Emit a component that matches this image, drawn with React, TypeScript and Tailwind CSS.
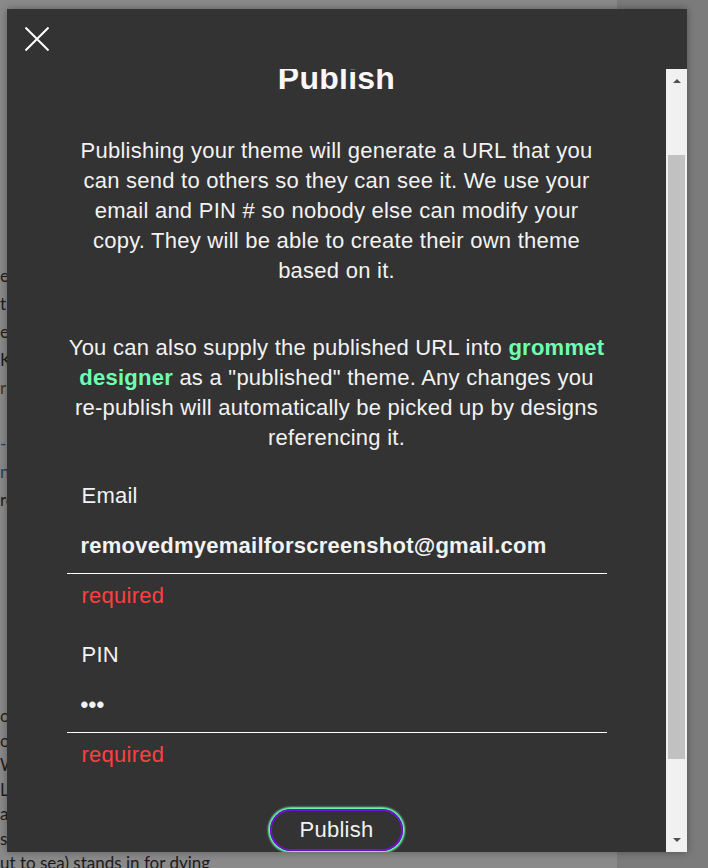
import { Fragment } from "react";

const BACK_LINES_TOP = [
  { text: "e the best of both worlds and", color: "text-[#1c1c1c]" },
  { text: "t this story holds up again", color: "text-[#1c1c1c]" },
  { text: "e and the rest of them", color: "text-[#1c1c1c]" },
  { text: "K nothing else comes close", color: "text-[#1c1c1c]" },
  { text: "r chapter three", color: "text-[#4a3414]" },
  { text: "", color: "" },
  { text: "- a footnote", color: "text-[#1d3f63]" },
  { text: "n more reading", color: "text-[#1d3f63]" },
  { text: "ro the archive", color: "text-[#1c1c1c]" },
];

const BACK_LINES_BOTTOM = [
  "o the ones who stayed behind",
  "o the long road home",
  "W hen the tide came in",
  "L ater that same evening",
  "a nd nobody said a word",
  "sa iling past the harbour",
  "ut to sea) stands in for dying",
];

function CloseIcon() {
  return (
    <svg width="24" height="24" viewBox="0 0 24 24" fill="none" aria-hidden="true">
      <path d="M0.5 0.5 L23.5 23.5 M0.5 23.5 L23.5 0.5" stroke="#ffffff" strokeWidth="2" />
    </svg>
  );
}

function Field({ label, value, bold, className }: { label: string; value: string; bold?: boolean; className?: string }) {
  return (
    <div className={className}>
      <div className="px-[15px] text-[22px] leading-[30px] text-[#f2f2f2]">{label}</div>
      <div
        className={`border-b border-white pb-[12px] pl-[14px] pt-[20px] text-[22px] leading-[30px] text-[#f2f2f2] ${
          bold ? "font-bold" : ""
        }`}
      >
        {value}
      </div>
      <div className="mt-[7px] px-[15px] text-[22px] leading-[30px] text-[#ff4040]">required</div>
    </div>
  );
}

function FakeScrollbar() {
  return (
    <div className="flex w-[21px] shrink-0 flex-col items-center bg-[#f1f1f1]">
      <div className="flex h-[24px] items-center justify-center">
        <div className="h-0 w-0 border-x-[4px] border-b-[4px] border-x-transparent border-b-[#505050]" />
      </div>
      <div className="h-[62px]" />
      <div className="h-[604px] w-[17px] bg-[#c1c1c1]" />
      <div className="flex-1" />
      <div className="flex h-[24px] items-center justify-center">
        <div className="h-0 w-0 border-x-[4px] border-t-[4px] border-x-transparent border-t-[#505050]" />
      </div>
    </div>
  );
}

export default function App() {
  return (
    <div className="relative flex h-[868px] w-[708px] overflow-hidden bg-[#7b7b7b]">
      {/* page underneath the layer */}
      <div className="h-full w-[617px] whitespace-nowrap bg-[#8a8a8a] font-[family-name:Lato,sans-serif] text-[17px]">
        <div className="pt-[262px] leading-[28px]">
          {BACK_LINES_TOP.map((line, index) => (
            <div key={index} className={`h-[28px] ${line.color}`}>
              {line.text}
            </div>
          ))}
        </div>
        <div className="pt-[190px] leading-[24.5px] text-[#1c1c1c]">
          {BACK_LINES_BOTTOM.map((line) => (
            <Fragment key={line}>
              <div className="h-[24.5px]">{line}</div>
            </Fragment>
          ))}
        </div>
      </div>

      {/* publish layer */}
      <div className="absolute left-[7px] top-[9px] flex h-[843px] w-[680px] flex-col bg-[#333333] font-[family-name:Liberation_Sans,Arial,sans-serif] tracking-[0.25px] shadow-[0_0_8px_rgba(0,0,0,0.35)]">
        <div className="flex h-[60px] shrink-0 items-center pl-[18px]">
          <button type="button" aria-label="Close" className="flex">
            <CloseIcon />
          </button>
        </div>

        <div className="flex min-h-0 flex-1">
          <div className="min-w-0 flex-1 overflow-hidden">
            <div className="mx-auto -mt-[10px] flex w-[540px] flex-col items-center text-center text-[#f2f2f2]">
              <h2 className="text-[32px] font-bold leading-[38px] text-[#f8f8f8]">Publish</h2>
              <p className="mt-[39px] text-[22px] leading-[30px]">
                Publishing your theme will generate a URL that you can send to others so they can see it. We use your
                email and PIN # so nobody else can modify your copy. They will be able to create their own theme based
                on it.
              </p>
              <p className="mt-[47px] text-[22px] leading-[30px]">
                You can also supply the published URL into{" "}
                <span className="font-bold text-[#6FFFB0]">grommet designer</span> as a "published" theme. Any
                changes you re-publish will automatically be picked up by designs referencing it.
              </p>

              <div className="mt-[28px] w-full text-left">
                <Field label="Email" value="removedmyemailforscreenshot@gmail.com" bold />
                <Field label="PIN" value="•••" bold className="mt-[29px]" />
              </div>

              <button
                type="button"
                className="mt-[39px] shrink-0 rounded-full border-2 border-[#7011d3] px-[28px] py-[4px] text-[22px] leading-[30px] text-[#f2f2f2] shadow-[0_0_2px_2px_#6FFFB0]"
              >
                Publish
              </button>
            </div>
          </div>
          <FakeScrollbar />
        </div>
      </div>
    </div>
  );
}
